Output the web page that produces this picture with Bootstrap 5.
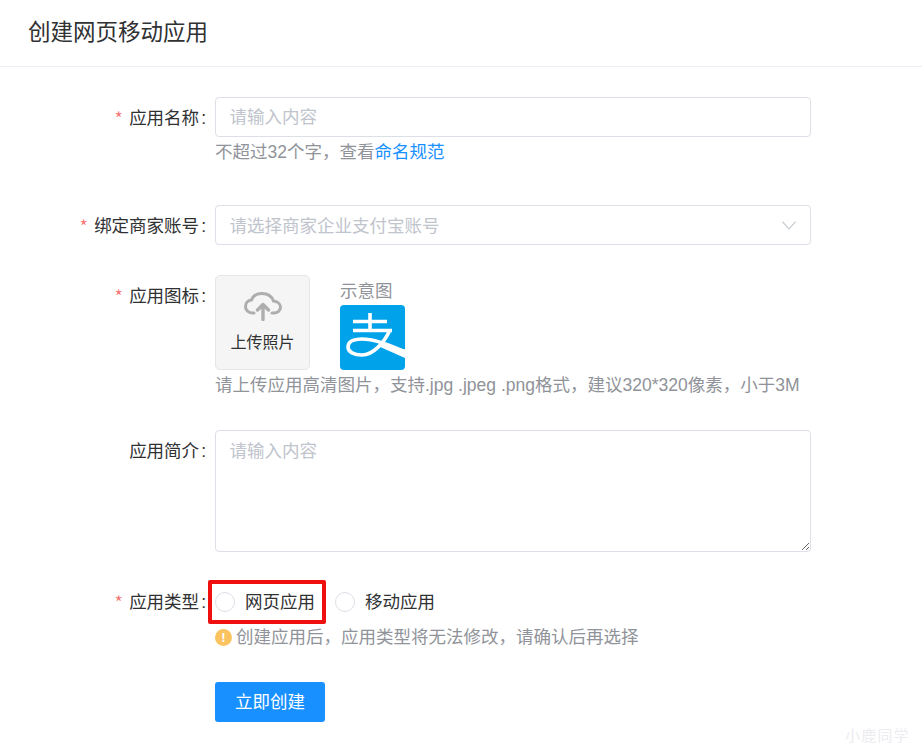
<!DOCTYPE html>
<html lang="zh-CN">
<head>
<meta charset="utf-8">
<title>创建网页移动应用</title>
<link href="https://cdn.jsdelivr.net/npm/bootstrap@5.3.0/dist/css/bootstrap.min.css" rel="stylesheet">
<style>
html,body{height:745px;overflow:hidden}
body{font-family:"Liberation Sans","Noto Sans CJK SC",sans-serif;font-size:17.5px;color:#303133;background:#fff;line-height:1.25}
.pg-head{height:67px;border-bottom:1px solid #ebeef5;padding:0 28px;font-size:22.5px;line-height:65px;color:#303133}
.pg-form{padding-top:30px;position:relative}
.frow{display:flex}
.flabel{width:215px;flex:none;padding-right:9px;text-align:right;line-height:42px;color:#303133}
.flabel b{font-weight:300;color:#f56c6c;margin-right:6px;font-size:20px;line-height:20px;vertical-align:-3px;font-family:"Noto Sans CJK SC",sans-serif}
.flabel i{font-style:normal;margin-left:2px}
.ltype{padding-top:1px}
.ffield{width:596px;flex:none}
.finput{display:block;width:100%;height:40px;border:1px solid #dcdfe6;border-radius:4px;padding:1px 13.5px 0;font:inherit;line-height:38px;color:#303133;background:#fff;outline:0}
.finput::placeholder,.farea::placeholder{color:#c0c4cc;opacity:1}
.fhelp{color:#909399;line-height:30px}
.fhelp a{color:#1890ff;text-decoration:none}
.fsel{position:relative;display:flex;align-items:center;color:#c0c4cc;justify-content:space-between}
.fsel svg{margin-right:1px}
.upl{width:95px;height:95px;background:#f5f5f5;border:1px solid #e6e6e6;border-radius:5px;font-size:16px;color:#303133;gap:12px}
.demo{margin-left:30px;color:#909399}
.demo span{display:block;height:30px;line-height:30px;padding-top:1px}
.demo svg{display:block}
.farea{display:block;width:100%;height:122px;border:1px solid #dcdfe6;border-radius:4px;padding:8px 13.5px;font:inherit;line-height:24px;color:#303133;outline:0;resize:vertical}
.radios{height:39px;gap:20px;margin-top:3px}
.ritem{display:flex;align-items:center;gap:10px;color:#303133}
.ritem span{margin-top:-2px}
.rdot{display:block;width:20px;height:20px;border:1px solid #dcdfe6;border-radius:50%;background:#fff}
.warn{display:inline-block;width:17px;height:17px;border-radius:50%;background:#fac35f;color:#fff;font-size:13px;font-weight:700;line-height:17px;text-align:center;margin-right:4px;vertical-align:1px}
.anno{position:absolute;left:208px;top:513px;width:118px;height:44px;border:4px solid #f00f0f;border-radius:2px;pointer-events:none}
.go{width:110px;height:40px;background:#1890ff;border:0;border-radius:3px;color:#fff;font-size:17.5px;padding:1px 0 0;line-height:39px}
.wm{position:absolute;left:845px;bottom:0;font-size:15px;letter-spacing:1.2px;color:#ececf0;line-height:19px}
</style>
</head>
<body>
<div class="pg-head">创建网页移动应用</div>
<form class="pg-form">
  <div class="frow" style="height:108px">
    <div class="flabel"><b>*</b>应用名称<i>:</i></div>
    <div class="ffield">
      <input class="finput" placeholder="请输入内容">
      <div class="fhelp">不超过32个字&#65292;查看<a href="#">命名规范</a></div>
    </div>
  </div>
  <div class="frow" style="height:70px">
    <div class="flabel"><b>*</b>绑定商家账号<i>:</i></div>
    <div class="ffield">
      <div class="finput fsel"><span>请选择商家企业支付宝账号</span>
        <svg width="14" height="9" viewBox="0 0 14 9"><path d="M.5.7 7 8 13.500.7" fill="none" stroke="#c0c4cc" stroke-width="1.100"/></svg>
      </div>
    </div>
  </div>
  <div class="frow" style="height:155px">
    <div class="flabel"><b>*</b>应用图标<i>:</i></div>
    <div class="ffield">
      <div class="d-flex">
        <div class="upl d-flex flex-column align-items-center justify-content-center">
          <svg width="38" height="29" viewBox="0 0 38 29"><path d="M10 21H9C4.500 21 1.500 18 1.500 14.500 1.500 11 4 8.500 7.500 8 9 4 13 1.500 18 1.500 24 1.500 28 5 29.500 9 33.500 9.500 36.500 12 36.500 15 36.500 18.500 33.500 21 30 21H28" fill="none" stroke="#aeaeae" stroke-width="3" stroke-linecap="round"/><path d="M19 27.500V13M13.500 18 19 12.500 24.500 18" fill="none" stroke="#aeaeae" stroke-width="3.400" stroke-linecap="round" stroke-linejoin="round"/></svg>
          <span>上传照片</span>
        </div>
        <div class="demo"><span>示意图</span>
          <svg width="65" height="65" viewBox="0 0 65 65"><rect width="65" height="65" rx="4" fill="#00a2ea"/><path d="M13 16.500H47M13 25.500H52M30 8V25M50 25C44 38 33 50 22 50 14 50 8 47 8 42 8 36 15 34 22 34 34 34 50 40 65 47" fill="none" stroke="#fff" stroke-width="3.600"/><path d="M42 38.500 65 44.500V53L38 41Z" fill="#fff"/></svg>
        </div>
      </div>
      <div class="fhelp">请上传应用高清图片&#65292;支持.jpg .jpeg .png格式&#65292;建议320*320像素&#65292;小于3M</div>
    </div>
  </div>
  <div class="frow" style="height:150px">
    <div class="flabel">应用简介<i>:</i></div>
    <div class="ffield"><textarea class="farea" placeholder="请输入内容"></textarea></div>
  </div>
  <div class="frow" style="height:102px">
    <div class="flabel ltype"><b>*</b>应用类型<i>:</i></div>
    <div class="ffield">
      <div class="radios d-flex">
        <label class="ritem"><span class="rdot"></span>网页应用</label>
        <label class="ritem"><span class="rdot"></span>移动应用</label>
      </div>
      <div class="fhelp"><span class="warn">!</span>创建应用后&#65292;应用类型将无法修改&#65292;请确认后再选择</div>
    </div>
  </div>
  <div class="frow">
    <div class="flabel"></div>
    <div class="ffield"><button type="button" class="btn go">立即创建</button></div>
  </div>
  <div class="anno"></div>
</form>
<div class="wm">小鹿同学</div>
<script src="https://cdn.jsdelivr.net/npm/bootstrap@5.3.0/dist/js/bootstrap.bundle.min.js"></script>
</body>
</html>
